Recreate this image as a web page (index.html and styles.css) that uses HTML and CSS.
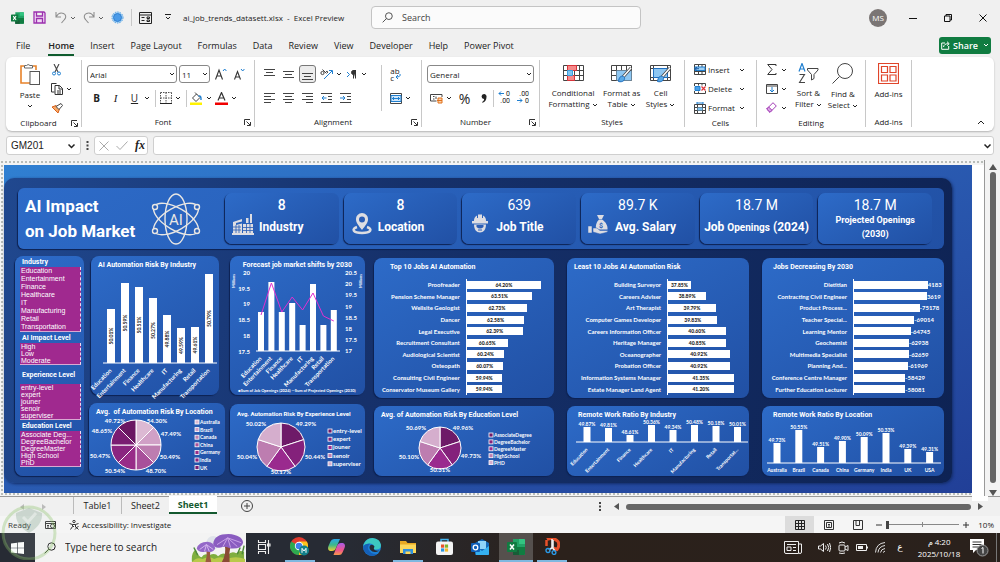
FILE: index.html
```html
<!DOCTYPE html>
<html lang="en">
<head>
    <meta charset="UTF-8">
    <meta name="viewport" content="width=device-width, initial-scale=1.0">
    <title>ai_job_trends_datasett.xlsx - Excel Preview</title>
    <link rel="stylesheet" href="styles.css">
</head>
<body>
    <!-- shared icons -->
    <svg class="defs" aria-hidden="true">
        <symbol id="chev" viewBox="0 0 6 4"><path d="M1 1l2 2 2-2" fill="none" stroke="currentColor" stroke-width="1"/></symbol>
        <symbol id="launch" viewBox="0 0 7 7"><path d="M.5 6V.5H6M2.500 2.500l3.500 3.500M6.500 3v3.500H3" fill="none" stroke="#333"/></symbol>
        <symbol id="excel" viewBox="0 0 18 16">
            <path d="M6 0h11a1 1 0 0 1 1 1v14a1 1 0 0 1-1 1H6z" fill="#21a366"/>
            <path d="M12 0h5a1 1 0 0 1 1 1v4h-6z" fill="#33c481"/>
            <path d="M6 8h12v7a1 1 0 0 1-1 1H6z" fill="#107c41"/>
            <path d="M6 11h6v5H6z" fill="#185c37"/>
            <rect y="3" width="10" height="10" rx="1" fill="#107c41"/>
            <path d="M3 5.500l4 5M7 5.500l-4 5" stroke="#fff" stroke-width="1.500"/>
        </symbol>
        <symbol id="lens" viewBox="0 0 12 12"><circle cx="7.500" cy="4.500" r="3.700" fill="none" stroke="currentColor"/><path d="M4.800 7.200L.7 11.300" stroke="currentColor"/></symbol>
    </svg>

    <header class="titlebar">
        <div class="quick">
            <svg width="13" height="12"><use href="#excel"/></svg>
            <button aria-label="Save"><svg width="13" height="13" viewBox="0 0 13 13"><path d="M1 1h10l1 1v10H1zM3.500 1v4h6V1M3.500 12V7.500h6V12" fill="#f0d9f5" stroke="#9b2fae" stroke-width="1.300"/></svg></button>
            <button class="dim" aria-label="Undo"><svg width="12" height="13" viewBox="0 0 12 13"><path d="M1 1v5h5M1.300 5.500C3 2.500 6 1.500 8.500 2.500s3 4 1 6L6.500 12" fill="none" stroke="#666" stroke-width="1.100"/></svg></button>
            <svg class="chev dim" width="6" height="4"><use href="#chev"/></svg>
            <button class="dim" aria-label="Redo"><svg width="12" height="13" viewBox="0 0 12 13"><path d="M11 1v5H6M10.700 5.500C9 2.500 6 1.500 3.500 2.500s-3 4-1 6L5.500 12" fill="none" stroke="#666" stroke-width="1.100"/></svg></button>
            <svg class="chev dim" width="6" height="4"><use href="#chev"/></svg>
            <button aria-label="Touch mode"><svg width="13" height="13" viewBox="0 0 13 13"><circle cx="6.500" cy="6.500" r="5.500" fill="#b8dcf7" stroke="#4b9be0" stroke-dasharray="1.500 1"/><circle cx="6.500" cy="6.500" r="4" fill="#4b9be8" stroke="#2e7fd0"/></svg></button>
            <i class="vline"></i>
            <button aria-label="Form"><svg width="13" height="12" viewBox="0 0 13 12"><path d="M.5.500h12v11H.5zM.5 3h12M2.500 5.500h3M2.500 8.500h3M8 5h2.500v1.500H8zM8 8h2.500v1.500H8z" fill="none" stroke="#222"/></svg></button>
            <button aria-label="Customize Quick Access Toolbar"><svg width="6" height="7" viewBox="0 0 6 7"><path d="M0 .500h6M1 3l2 2 2-2" fill="none" stroke="#222"/></svg></button>
        </div>
        <span class="doc-name">ai_job_trends_datasett.xlsx&nbsp; -&nbsp; Excel Preview</span>
        <label class="search">
            <svg width="11" height="11"><use href="#lens"/></svg>
            <input type="search" placeholder="Search" aria-label="Search">
        </label>
        <div class="window-buttons">
            <span class="avatar">MS</span>
            <button aria-label="Minimize"><svg width="8" height="8" viewBox="0 0 8 8"><path d="M0 4.500h8" stroke="#111"/></svg></button>
            <button aria-label="Restore"><svg width="8" height="8" viewBox="0 0 8 8"><path d="M.5 2h5.500v5.500H.5zM2 2V.5h5.500V6H6" fill="none" stroke="#111"/></svg></button>
            <button aria-label="Close"><svg width="8" height="8" viewBox="0 0 8 8"><path d="M.5.500l7 7M7.500.500l-7 7" stroke="#111"/></svg></button>
        </div>
    </header>

    <nav class="tabs">
        <a href="#">File</a>
        <a href="#" class="current">Home</a>
        <a href="#">Insert</a>
        <a href="#">Page Layout</a>
        <a href="#">Formulas</a>
        <a href="#">Data</a>
        <a href="#">Review</a>
        <a href="#">View</a>
        <a href="#">Developer</a>
        <a href="#">Help</a>
        <a href="#">Power Pivot</a>
        <button class="share">
            <svg width="9" height="9" viewBox="0 0 9 9"><path d="M4 2H.7v6.300h7V5M2.500 6C3 3.500 4.500 2.700 7.500 2.700M6 .7l2.200 2L6 4.700" fill="none" stroke="#fff"/></svg>
            Share
            <svg class="chev" width="6" height="4"><use href="#chev"/></svg>
        </button>
    </nav>

    <section class="ribbon">
        <div class="group g-clipboard">
            <div class="group-body">
                <button class="big">
                    <svg width="20" height="22" viewBox="0 0 20 22"><path d="M4 3H1v17h9" fill="none" stroke="#e8832a" stroke-width="1.600"/><path d="M13 3h3v4" fill="none" stroke="#e8832a" stroke-width="1.600"/><path d="M4.500 5V2.500h2Q8 .500 10 2.500h2.500V5z" fill="#fff" stroke="#666"/><rect x="10" y="8.500" width="9.500" height="13" fill="#fff" stroke="#555"/></svg>
                    <span>Paste</span>
                    <svg class="chev" width="6" height="4"><use href="#chev"/></svg>
                </button>
                <div class="stack">
                    <div class="row"><button class="ib" aria-label="Cut"><svg width="9" height="12" viewBox="0 0 9 12"><path d="M2 0l4 8M7 0L3 8" stroke="#444" stroke-width="1.100"/><circle cx="2" cy="9.500" r="1.500" fill="none" stroke="#1f7fd0"/><circle cx="7" cy="9.500" r="1.500" fill="none" stroke="#1f7fd0"/></svg></button></div>
                    <div class="row"><button class="ib" aria-label="Copy"><svg width="12" height="12" viewBox="0 0 12 12"><path d="M3.500 9H.5V.5h5M4 2.500h4.500l3 3v6H4zM8 2.500v3.500h3.500M6 8h4M6 10h4" fill="#fff" stroke="#333"/></svg></button><svg class="chev" width="6" height="4"><use href="#chev"/></svg></div>
                    <div class="row"><button class="ib" aria-label="Format painter"><svg width="12" height="12" viewBox="0 0 12 12"><path d="M1 5l6 6 1.500-4-3.500-3.500z" fill="#f7a865" stroke="#d9601a"/><path d="M5 4.500l3 3 3.500-4L10 1.500z" fill="#fff" stroke="#444"/></svg></button></div>
                </div>
            </div>
            <div class="group-name launcher">Clipboard<svg width="7" height="7"><use href="#launch"/></svg></div>
        </div>

        <div class="group g-font">
            <div class="group-body two-rows">
                <div class="row">
                    <span class="combo combo-font"><select aria-label="Font"><option>Arial</option></select><svg class="chev" width="6" height="4"><use href="#chev"/></svg></span>
                    <span class="combo combo-size"><select aria-label="Font size"><option>11</option></select><svg class="chev" width="6" height="4"><use href="#chev"/></svg></span>
                    <button class="ib" aria-label="Increase font size"><svg width="12" height="12" viewBox="0 0 12 12"><path d="M.5 11.500L4 2l3.500 9.500M1.800 8h4.500" fill="none" stroke="#333" stroke-width="1.100"/><path d="M8 3l1.700-2 1.700 2" fill="none" stroke="#1f7fd0"/></svg></button>
                    <button class="ib" aria-label="Decrease font size"><svg width="11" height="12" viewBox="0 0 11 12"><path d="M.5 11.500L3.500 3.500l3 8M1.500 9h4" fill="none" stroke="#333" stroke-width="1.100"/><path d="M7 1l1.700 2 1.700-2" fill="none" stroke="#1f7fd0"/></svg></button>
                </div>
                <div class="row">
                    <button class="ib glyph"><b>B</b></button>
                    <button class="ib glyph serif"><i>I</i></button>
                    <button class="ib glyph"><u>U</u></button><svg class="chev" width="6" height="4"><use href="#chev"/></svg>
                    <i class="vline"></i>
                    <button class="ib" aria-label="Borders"><svg width="12" height="12" viewBox="0 0 12 12"><path d="M.5.500v11M11.500.500v11M6 .500v11M.5.500h11M.5 6h11" fill="none" stroke="#555" stroke-dasharray="1.500 1"/><path d="M0 11.500h12" stroke="#222"/></svg></button><svg class="chev" width="6" height="4"><use href="#chev"/></svg>
                    <i class="vline"></i>
                    <button class="ib" aria-label="Fill color"><svg width="13" height="13" viewBox="0 0 13 13"><path d="M2.500 6L6.500 2l3.500 3.500-4 4zM5 .500l2 2" fill="#fff" stroke="#444"/><path d="M8.500 4c2-.5 2.700 1 2.500 4" fill="none" stroke="#1f7fd0" stroke-width="1.400"/><path d="M0 10.500h12V13H0z" fill="#fff200"/></svg></button><svg class="chev" width="6" height="4"><use href="#chev"/></svg>
                    <button class="ib" aria-label="Font color"><svg width="13" height="13" viewBox="0 0 13 13"><path d="M3 8.500L6.500.500 10 8.500M4.200 6h4.600" fill="none" stroke="#333" stroke-width="1.200"/><path d="M0 10.500h13V13H0z" fill="#f00000"/></svg></button><svg class="chev" width="6" height="4"><use href="#chev"/></svg>
                </div>
            </div>
            <div class="group-name launcher">Font<svg width="7" height="7"><use href="#launch"/></svg></div>
        </div>

        <div class="group g-align">
            <div class="group-body">
                <div class="two-rows">
                    <div class="row">
                        <button class="ib" aria-label="Top align"><svg width="11" height="11" viewBox="0 0 11 11"><path d="M0 .500h11M2 3.500h7M0 6.500h11" stroke="#444"/></svg></button>
                        <button class="ib" aria-label="Middle align"><svg width="11" height="11" viewBox="0 0 11 11"><path d="M0 2.500h11M2 5.500h7M0 8.500h11" stroke="#444"/></svg></button>
                        <button class="ib pressed" aria-label="Bottom align"><svg width="11" height="11" viewBox="0 0 11 11"><path d="M0 4.500h11M2 7.500h7M0 10.500h11" stroke="#444"/></svg></button>
                        <button class="ib" aria-label="Orientation"><svg width="13" height="12" viewBox="0 0 13 12"><circle cx="2.500" cy="5" r="1.600" fill="none" stroke="#444"/><path d="M2.500 1.500l4 4M6 3.500q2-1 1.500 1.500" fill="none" stroke="#444"/><path d="M4 11L12 3M9 2.500h3.500V6" fill="none" stroke="#1f7fd0"/></svg></button><svg class="chev" width="6" height="4"><use href="#chev"/></svg>
                        <button class="ib" aria-label="Text direction"><svg width="9" height="9" viewBox="0 0 9 9"><path d="M0 2l2.500 2.500L0 7" fill="none" stroke="#1f7fd0"/><path d="M6.500 8.500v-8h2.500M8.500.500v8M6.500.500a2 2 0 0 0 0 4z" fill="#333" stroke="#333"/></svg></button><svg class="chev" width="6" height="4"><use href="#chev"/></svg>
                    </div>
                    <div class="row">
                        <button class="ib" aria-label="Align left"><svg width="11" height="11" viewBox="0 0 11 11"><path d="M0 .500h11M0 3.500h7M0 6.500h11M0 9.500h7" stroke="#444"/></svg></button>
                        <button class="ib" aria-label="Center"><svg width="11" height="11" viewBox="0 0 11 11"><path d="M0 .500h11M2 3.500h7M0 6.500h11M2 9.500h7" stroke="#444"/></svg></button>
                        <button class="ib" aria-label="Align right"><svg width="11" height="11" viewBox="0 0 11 11"><path d="M0 .500h11M4 3.500h7M0 6.500h11M4 9.500h7" stroke="#444"/></svg></button>
                        <button class="ib" aria-label="Decrease indent"><svg width="11" height="11" viewBox="0 0 11 11"><path d="M0 .500h11M7 3.500h4M7 6.500h4M0 9.500h11" stroke="#444"/><path d="M5.500 5H1M3 3L1 5l2 2" fill="none" stroke="#1f7fd0"/></svg></button>
                        <button class="ib" aria-label="Increase indent"><svg width="11" height="11" viewBox="0 0 11 11"><path d="M0 .500h11M7 3.500h4M7 6.500h4M0 9.500h11" stroke="#444"/><path d="M0 5h4.500M3 3l2 2-2 2" fill="none" stroke="#1f7fd0"/></svg></button>
                    </div>
                </div>
                <i class="vline tall"></i>
                <div class="two-rows">
                    <div class="row"><button class="ib" aria-label="Wrap text"><span class="wrap-text">ab<br>c</span><svg class="wrap-arrow" width="6" height="6" viewBox="0 0 6 6"><path d="M5 0q1 3-4 3M3 1L1 3l2 2" fill="none" stroke="#1f7fd0"/></svg></button></div>
                    <div class="row"><button class="ib" aria-label="Merge"><svg width="12" height="11" viewBox="0 0 12 11"><path d="M.5.500h11v10H.5z" fill="#fff" stroke="#444"/><path d="M1 2.500h10v6H1z" fill="#cfe6fa" stroke="#1f7fd0"/><path d="M2 5.500h8M4 4L2.500 5.500 4 7M8 4l1.500 1.500L8 7" fill="none" stroke="#1f7fd0"/></svg></button><svg class="chev" width="6" height="4"><use href="#chev"/></svg></div>
                </div>
            </div>
            <div class="group-name launcher">Alignment<svg width="7" height="7"><use href="#launch"/></svg></div>
        </div>

        <div class="group g-number">
            <div class="group-body two-rows">
                <div class="row"><span class="combo combo-number"><select aria-label="Number format"><option>General</option></select><svg class="chev" width="6" height="4"><use href="#chev"/></svg></span></div>
                <div class="row">
                    <button class="ib" aria-label="Accounting format"><svg width="13" height="11" viewBox="0 0 13 11"><path d="M12 4V1.500H.5V8h6M3 3.500h1.500M3 6h1.500M6 3.500v2.500" fill="none" stroke="#444"/><path d="M8 5h4v5H8zM7 7.500h5" fill="#fbd0a8" stroke="#e0701a"/></svg></button><svg class="chev" width="6" height="4"><use href="#chev"/></svg>
                    <button class="ib glyph percent">%</button>
                    <button class="ib" aria-label="Comma style"><svg width="6" height="9" viewBox="0 0 6 9"><path d="M3 0a2.500 2.500 0 0 1 2.500 3C5.500 6 4 8 1.500 8.700L1 8c1.500-.8 2-1.600 2.100-3A2.500 2.500 0 1 1 3 0z" fill="#222"/></svg></button>
                    <i class="vline"></i>
                    <button class="ib decimals" aria-label="Increase decimal"><span><svg width="6" height="5" viewBox="0 0 6 5"><path d="M6 2.500H1M3 .500l-2 2 2 2" fill="none" stroke="#1f7fd0"/></svg> 0</span><span>.00</span></button>
                    <button class="ib decimals" aria-label="Decrease decimal"><span>.00</span><span><svg width="6" height="5" viewBox="0 0 6 5"><path d="M0 2.500h5M3 .500l2 2-2 2" fill="none" stroke="#1f7fd0"/></svg> 0</span></button>
                </div>
            </div>
            <div class="group-name launcher">Number<svg width="7" height="7"><use href="#launch"/></svg></div>
        </div>

        <div class="group g-styles">
            <div class="group-body">
                <button class="big">
                    <svg width="21" height="20" viewBox="0 0 21 20"><path d="M.5 2.500h20v15H.5zM.5 7.500h20M.5 12.500h20M4.500 2.500v15M11.500 2.500v15M16.500 2.500v15" fill="#fff" stroke="#444"/><path d="M4.500 2.500h9v5h-9zM4.500 12.500h7v5h-7z" fill="#f58a8a" stroke="#d9343a"/><path d="M4.500 7.500h5v5h-5z" fill="#7fc4f2" stroke="#3aa0e0"/></svg>
                    <span>Conditional<br>Formatting <svg class="chev" width="6" height="4"><use href="#chev"/></svg></span>
                </button>
                <button class="big">
                    <svg width="21" height="20" viewBox="0 0 21 20"><path d="M.5 2.500h20v15H.5zM.5 7.500h20M.5 12.500h20M5.500 2.500v15M10.500 2.500v15M15.500 2.500v15" fill="#fff" stroke="#444"/><path d="M5.500 7.500h15v10h-15z" fill="#8ec7f2"/><path d="M20 5l-8 9" stroke="#444" stroke-width="3"/><path d="M20 5l-8 9" stroke="#fff" stroke-width="1.500"/><path d="M12.500 13.500c-3-1-4.500 1-5 5 4 1 6.500-1 6-4z" fill="#5aa9e6" stroke="#1f6fc0"/></svg>
                    <span>Format as<br>Table <svg class="chev" width="6" height="4"><use href="#chev"/></svg></span>
                </button>
                <button class="big">
                    <svg width="21" height="20" viewBox="0 0 21 20"><path d="M.5 2.500h20v15H.5zM.5 5.500h20M.5 14.500h20M3.500 2.500v15M17.500 2.500v15" fill="#fff" stroke="#444"/><path d="M3.500 5.500h14v9h-14z" fill="#8ec7f2" stroke="#1f6fc0"/><path d="M20 5l-8 9" stroke="#444" stroke-width="3"/><path d="M20 5l-8 9" stroke="#fff" stroke-width="1.500"/><path d="M12.500 13.500c-3-1-4.500 1-5 5 4 1 6.500-1 6-4z" fill="#5aa9e6" stroke="#1f6fc0"/></svg>
                    <span>Cell<br>Styles <svg class="chev" width="6" height="4"><use href="#chev"/></svg></span>
                </button>
            </div>
            <div class="group-name">Styles</div>
        </div>

        <div class="group g-cells">
            <div class="group-body stack">
                <button class="row line"><svg width="12" height="11" viewBox="0 0 12 11"><path d="M.5.500h11v10H.5zM4.500.500v10M8 .500v10M.5 7.500h11" fill="#fff" stroke="#444"/><path d="M1 3h10v3.500H1z" fill="#9fd0f5" stroke="#1f7fd0"/><path d="M5 4.700H1M3 3L1 4.700 3 6.500" fill="none" stroke="#1f5fa8"/></svg><span>Insert</span><svg class="chev" width="6" height="4"><use href="#chev"/></svg></button>
                <button class="row line"><svg width="12" height="11" viewBox="0 0 12 11"><path d="M.5 3V.5h11V3M.5 8v2.500h11V8M4.500.500v2M8 .500v2M4.500 8.500v2" fill="#fff" stroke="#444"/><path d="M1 3.500h5v4H1z" fill="#4ba0e8" stroke="#1f7fd0"/><path d="M7.500 3.500l4 4M11.500 3.500l-4 4" stroke="#e0343a" stroke-width="1.200"/></svg><span>Delete</span><svg class="chev" width="6" height="4"><use href="#chev"/></svg></button>
                <button class="row line"><svg width="12" height="12" viewBox="0 0 12 12"><path d="M.5 2.500h11v9H.5zM3.500 2.500v9M8.500 2.500v9M.5 5.500h11M.5 8.500h11" fill="#fff" stroke="#444"/><path d="M3.500 5.500h5v3h-5z" fill="#7fc4f2"/><path d="M3 0v2M9 0v2M3 1h6" stroke="#1f7fd0"/></svg><span>Format</span><svg class="chev" width="6" height="4"><use href="#chev"/></svg></button>
            </div>
            <div class="group-name">Cells</div>
        </div>

        <div class="group g-editing">
            <div class="group-body">
                <div class="stack">
                    <div class="row"><button class="ib" aria-label="AutoSum"><svg width="10" height="11" viewBox="0 0 10 11"><path d="M9 2V.5H.7L5 5.500.7 10.500H9V9" fill="none" stroke="#333"/></svg></button><svg class="chev" width="6" height="4"><use href="#chev"/></svg></div>
                    <div class="row"><button class="ib" aria-label="Fill"><svg width="12" height="10" viewBox="0 0 12 10"><path d="M.5.500h11v9H.5zM.5 2h11" fill="#fff" stroke="#444"/><path d="M6 3v5M4 6l2 2 2-2" fill="none" stroke="#1f7fd0"/></svg></button><svg class="chev" width="6" height="4"><use href="#chev"/></svg></div>
                    <div class="row"><button class="ib" aria-label="Clear"><svg width="11" height="11" viewBox="0 0 11 11"><path d="M.7 7L7 .7l3.300 3.300L4 10.300z" fill="#fff" stroke="#a23bb5"/><path d="M.7 7l2-2L6 8.300l-2 2z" fill="#d9a3e3" stroke="#a23bb5"/></svg></button><svg class="chev" width="6" height="4"><use href="#chev"/></svg></div>
                </div>
                <button class="big">
                    <svg width="21" height="20" viewBox="0 0 21 20"><path d="M1 8.500L4 .500l3 8M2 6h4" fill="none" stroke="#1f7fd0" stroke-width="1.200"/><path d="M1.500 11.500h5l-5 8h5.500" fill="none" stroke="#444" stroke-width="1.100"/><path d="M9.500 5.500h10.500v1.500l-4 4.500v4l-2.500 1.500v-5.500l-4-4.500z" fill="#fff" stroke="#444"/></svg>
                    <span>Sort &amp;<br>Filter <svg class="chev" width="6" height="4"><use href="#chev"/></svg></span>
                </button>
                <button class="big">
                    <svg width="21" height="21" viewBox="0 0 21 21"><circle cx="13" cy="8" r="7.500" fill="#fff" stroke="#444"/><path d="M7.500 13.500L.5 20.500" stroke="#444"/></svg>
                    <span>Find &amp;<br>Select <svg class="chev" width="6" height="4"><use href="#chev"/></svg></span>
                </button>
            </div>
            <div class="group-name">Editing</div>
        </div>

        <div class="group g-addins">
            <div class="group-body">
                <button class="big">
                    <svg width="21" height="21" viewBox="0 0 21 21"><path d="M.5.500h20v20H.5zM3.500 3.500h6v6h-6zM12 3.500h6v6h-6zM3.500 12h6v6h-6zM12 12h6v6h-6z" fill="#fff" stroke="#e0452a" stroke-width="1.200"/></svg>
                    <span>Add-ins</span>
                </button>
            </div>
            <div class="group-name">Add-ins</div>
        </div>
        <button class="collapse" aria-label="Collapse ribbon"><svg width="8" height="5" viewBox="0 0 8 5"><path d="M1 4l3-3 3 3" fill="none" stroke="#222"/></svg></button>
    </section>

    <section class="formula-row">
        <label class="name-box"><input value="GM201" aria-label="Name box"><svg width="9" height="6" viewBox="0 0 6 4"><use href="#chev"/></svg></label>
        <svg width="3" height="9" viewBox="0 0 3 9"><path d="M.5 0h2v2h-2zM.5 3.500h2v2h-2zM.5 7h2v2h-2z" fill="#444"/></svg>
        <div class="fx">
            <svg width="10" height="10" viewBox="0 0 10 10"><path d="M.5.500l9 9M9.500.500l-9 9" stroke="#aaa"/></svg>
            <svg width="12" height="9" viewBox="0 0 12 9"><path d="M.5 5l3.500 3.500L11.500.500" fill="none" stroke="#aaa"/></svg>
            <i>fx</i>
        </div>
        <label class="formula"><input aria-label="Formula"><svg width="9" height="6" viewBox="0 0 6 4"><use href="#chev"/></svg></label>
    </section>

    <main class="sheet">
        <div class="canvas">
            <div class="board">
                <div class="hero">
                    <h1>AI Impact<br>on Job Market</h1>
                    <svg class="atom" width="52" height="52" viewBox="0 0 52 52">
                        <g fill="none" stroke="#e9e7e4" stroke-width="1.400">
                            <ellipse cx="26" cy="26" rx="11" ry="25"/>
                            <ellipse cx="26" cy="26" rx="11" ry="25" transform="rotate(60 26 26)"/>
                            <ellipse cx="26" cy="26" rx="11" ry="25" transform="rotate(-60 26 26)"/>
                        </g>
                        <g fill="#2a60b8" stroke="#e9e7e4" stroke-width="1.400">
                            <circle cx="5" cy="14" r="2.500"/><circle cx="47" cy="14" r="2.500"/><circle cx="5" cy="38" r="2.500"/><circle cx="47" cy="38" r="2.500"/>
                        </g>
                        <text x="26" y="31.500">AI</text>
                    </svg>
                    <div class="kpis">
                        <div class="kpi"><strong>8</strong><div><svg width="22" height="22" viewBox="0 0 22 22"><path d="M1 9l9-3v2.500L4 10v2l6-1.500V20H1zM11 11h10v9H11zM14 5h2.500v5H14zM18 1h2v9h-2zM0 20h22v2H0z" fill="#dddde2"/><path d="M11 14.500h10M11 17.500h10M14.500 11v9M18 11v9M1 14h8M1 17h8M4 12v8M7 12v8" stroke="#2a5db5" stroke-width=".8"/></svg><span>Industry</span></div></div>
                        <div class="kpi"><strong>8</strong><div><svg width="22" height="22" viewBox="0 0 18 22"><path d="M9 0a6 6 0 0 1 6 6.500C15 10 12 13 9 17 6 13 3 10 3 6.500A6 6 0 0 1 9 0z" fill="#dddde2"/><circle cx="9" cy="6.500" r="3" fill="#2a5db5"/><path d="M4 14c-6 2-4 6 5 6s11-4 5-6" fill="none" stroke="#dddde2" stroke-width="2.500"/></svg><span>Location</span></div></div>
                        <div class="kpi num-light"><strong>639</strong><div><svg width="22" height="22" viewBox="0 0 18 22"><path d="M3 8a6 6 0 0 1 3-5.500V5h1V1.500h4V5h1V2.500A6 6 0 0 1 15 8h2v2.500H1V8z" fill="#dddde2"/><path d="M3 11.500h12c0 5-2.500 8-6 8s-6-3-6-8z" fill="#dddde2"/><path d="M5.500 12h7v2q-3.500 3-7 0z" fill="#2a5db5"/><path d="M7 17h4" stroke="#2a5db5"/></svg><span>Job Title</span></div></div>
                        <div class="kpi num-light"><strong>89.7 K</strong><div><svg width="22" height="22" viewBox="0 0 22 22"><path d="M9 2h7l-2 4h-3zM11 6.500h3c4 2.500 6 6.500 5.500 10H8c-.5-4 0-7 3-10z" fill="#dddde2"/><path d="M0 13h4v7H0zM5 15h4l3 2.500h7q2 1-1 2L12 21l-7-2z" fill="#dddde2" stroke="#2a5db5" stroke-width=".5"/><text x="13" y="14.500" class="coin">$</text></svg><span>Avg. Salary</span></div></div>
                        <div class="kpi num-light"><strong>18.7 M</strong><div class="mid"><span>Job <small>Openings</small> (2024)</span></div></div>
                        <div class="kpi num-light tight"><strong>18.7 M</strong><div class="mid"><span>Projected Openings<br>(2030)</span></div></div>
                    </div>
                </div>

                <div class="panels">
                    <div class="left">
                        <aside class="card slicers">
                            <h3>Industry</h3>
                            <ul class="slicer roomy"><li>Education</li><li>Entertainment</li><li>Finance</li><li>Healthcare</li><li>IT</li><li>Manufacturing</li><li>Retail</li><li>Transportation</li></ul>
                            <h3>AI Impact Level</h3>
                            <ul class="slicer"><li>High</li><li>Low</li><li>Moderate</li></ul>
                            <h3 class="spaced">Experience Level</h3>
                            <ul class="slicer"><li>entry-level</li><li>expert</li><li>jouner</li><li>senoir</li><li>superviser</li></ul>
                            <h3>Education Level</h3>
                            <ul class="slicer"><li>Associate Deg...</li><li>DegreeBachelor</li><li>DegreeMaster</li><li>High School</li><li>PhD</li></ul>
                        </aside>
                        <div class="col c-industry">
                            <section class="card narrow"><h3>AI Automation Risk By Industry</h3><svg id="riskIndustry" viewBox="0 0 128 124"></svg></section>
                            <section class="card"><h3>Avg.&nbsp; of Automation Risk By Location</h3><svg id="pieLocation" viewBox="0 0 136 58"></svg></section>
                        </div>
                        <div class="col c-forecast">
                            <section class="card"><h3 class="centered">Forecast job market shifts by 2030</h3><svg id="forecast" viewBox="0 0 135 124"></svg></section>
                            <section class="card"><h3 class="snug">Avg. Automation Risk By Experience Level</h3><svg id="pieExperience" viewBox="0 0 135 57"></svg></section>
                        </div>
                    </div>
                    <div class="right">
                        <div class="col c-top">
                            <section class="card"><h3 class="inset">Top 10 Jobs AI Automation</h3><div class="hbars" id="topJobs"></div></section>
                            <section class="card"><h3>Avg. of Automation Risk By Education Level</h3><svg id="pieEducation" viewBox="0 0 180 55"></svg></section>
                        </div>
                        <div class="col c-least">
                            <section class="card"><h3>Least 10 Jobs AI Automation Risk</h3><div class="hbars" id="leastJobs"></div></section>
                            <section class="card"><h3 class="indent">Remote Work Ratio By Industry</h3><svg id="remoteIndustry" viewBox="0 0 182 55"></svg></section>
                        </div>
                        <div class="col c-decrease">
                            <section class="card"><h3 class="indent">Jobs Decreasing By 2030</h3><div class="hbars outside" id="decreasing"></div></section>
                            <section class="card"><h3 class="indent">Remote Work Ratio By Location</h3><svg id="remoteLocation" viewBox="0 0 182 55"></svg></section>
                        </div>
                    </div>
                </div>
            </div>
        </div>
        <div class="vscroll">
            <svg width="8" height="6" viewBox="0 0 8 6"><path d="M4 0l4 6H0z" fill="#555"/></svg>
            <i></i>
            <svg width="8" height="6" viewBox="0 0 8 6"><path d="M4 6l4-6H0z" fill="#555"/></svg>
        </div>
    </main>

    <div class="sheet-tabs">
        <div class="tab-arrows">
            <svg width="4" height="6" viewBox="0 0 4 6"><path d="M4 0v6L0 3z" fill="#bbb"/></svg>
            <svg width="4" height="6" viewBox="0 0 4 6"><path d="M0 0v6l4-3z" fill="#bbb"/></svg>
        </div>
        <button>Table1</button>
        <button>Sheet2</button>
        <button class="active">Sheet1</button>
        <button class="add" aria-label="New sheet"><svg width="12" height="12" viewBox="0 0 12 12"><path d="M6 3v6M3 6h6" stroke="#444"/><circle cx="6" cy="6" r="5.500" fill="none" stroke="#444"/></svg></button>
        <div class="hscroll">
            <svg class="grip" width="2" height="9" viewBox="0 0 2 9"><path d="M0 0h2v2H0zM0 3.500h2v2H0zM0 7h2v2H0z" fill="#444"/></svg>
            <svg width="5" height="7" viewBox="0 0 5 7"><path d="M5 0v7L0 3.500z" fill="#555"/></svg>
            <i></i>
            <svg width="5" height="7" viewBox="0 0 5 7"><path d="M0 0v7l5-3.500z" fill="#555"/></svg>
        </div>
    </div>

    <div class="status">
        <span class="ready">Ready</span>
        <svg width="11" height="10" viewBox="0 0 11 10"><path d="M.5 1.500h10v7H.5zM.5 3.500h10M2 5.500h2M2 7h2" fill="none" stroke="#333"/><circle cx="7.500" cy="6" r="2" fill="#f3f3f3" stroke="#333"/></svg>
        <svg class="access" width="10" height="10" viewBox="0 0 10 10"><circle cx="5" cy="1.500" r="1.200" fill="none" stroke="#333"/><path d="M.5 3.500l3 1v2L1.500 9.500M9.500 3.500l-3 1v2l1 1.500M3.500 4.500h3M4 6l1 1M6 6l3.500 3.500M9.500 6L6 9.500" fill="none" stroke="#333"/></svg>
        <span>Accessibility: Investigate</span>
        <div class="views">
            <button class="on" aria-label="Normal"><svg width="10" height="10" viewBox="0 0 10 10"><path d="M.5.500h9v9H.5zM.5 3.500h9M.5 6.500h9M3.500.500v9M6.500.500v9" fill="none" stroke="#222"/></svg></button>
            <button aria-label="Page layout"><svg width="10" height="10" viewBox="0 0 10 10"><path d="M.5.500h9v9H.5zM2.500 2.500h5v5h-5zM4 4.500h2M4 6h2" fill="none" stroke="#333"/></svg></button>
            <button aria-label="Page break preview"><svg width="10" height="10" viewBox="0 0 10 10"><path d="M.5.500h9v9H.5zM3 .500v5M6.500.500v5M3 5.500h3.500" fill="none" stroke="#333"/></svg></button>
            <button class="zoom-btn" aria-label="Zoom out"><svg width="6" height="6" viewBox="0 0 6 6"><path d="M0 3h6" stroke="#333"/></svg></button>
            <input type="range" min="10" max="400" value="10" aria-label="Zoom">
            <button class="zoom-btn" aria-label="Zoom in"><svg width="6" height="6" viewBox="0 0 6 6"><path d="M0 3h6M3 0v6" stroke="#333"/></svg></button>
            <span>10%</span>
        </div>
    </div>

    <footer class="taskbar">
        <button class="start" aria-label="Start"><svg width="13" height="12" viewBox="0 0 13 12"><path d="M0 1.500L6 .7v5H0zM6.700.6L13 0v5.700H6.700zM0 6.300h6v5l-6-.8zM6.700 6.300H13V12l-6.300-.7z" fill="#fff"/></svg></button>
        <label class="task-search">
            <svg width="12" height="12"><use href="#lens"/></svg>
            <input type="search" placeholder="Type here to search" aria-label="Type here to search">
            <svg class="mushrooms" width="55" height="28" viewBox="0 0 55 29">
                <circle cx="22" cy="9" r="7" fill="#dfe3ea"/>
                <path d="M0 29q-1-10 4-13 3 8 6 8 3-5 8-2 6-3 9 1 5-5 10-1 4-5 9-2 4-4 8-1v10z" fill="#7fae3f"/>
                <path d="M0 29q5-6 11-3 7-4 12 0 7-4 13 0 9-4 19 0v3z" fill="#b9c94a"/>
                <path d="M2 14l4 8M50 14l-3 7M54 12l-2 9" stroke="#4d8a3a" stroke-width="1.500"/>
                <path d="M34 12q2 8-3 17h8q-1-9 1-17z" fill="#8a4a34"/>
                <path d="M15 16q1 7-1 13h6q-2-6-1-13z" fill="#9a5a40"/>
                <path d="M22 10Q23 0 38 0q14 1 15 9-2 7-13 6-6-3-10-1-7 1-8-4z" fill="#8a5cc0"/>
                <path d="M26 11l11-7-5 9M37 4l3 10M37 4l10 9M37 4l14 5" stroke="#c9a3e8" fill="none"/>
                <path d="M5 15q2-7 11-7 8 1 8 7-2 5-9 3-8 2-10-3z" fill="#9468c8"/>
                <path d="M8 16l7-5-2 7M15 11l3 7M15 11l7 5" stroke="#d6b6ee" fill="none"/>
            </svg>
        </label>
        <div class="apps">
            <button aria-label="Task view"><svg width="14" height="14" viewBox="0 0 14 14"><path d="M1.500 0v2.500h7V0M1.500 14v-2.500h7V14M1.500 4.500h7v5h-7zM11.500 0v14M10.500 4h2.500v2h-2.500z" fill="none" stroke="#eee" stroke-width="1.100"/></svg></button>
            <button class="open" aria-label="Chrome"><svg width="20" height="19" viewBox="0 0 20 19"><circle cx="9" cy="9" r="9" fill="#e33b2e"/><path d="M9 9L1.200 4.500A9 9 0 0 0 9 18z" fill="#2da94f"/><path d="M9 9v9a9 9 0 0 0 7.800-13.500H9z" fill="#fcc31e"/><circle cx="9" cy="9" r="4.200" fill="#fff"/><circle cx="9" cy="9" r="3.300" fill="#3f80ea"/><circle cx="14" cy="13.500" r="5" fill="#12808a"/><path d="M12 15.800v-4.500l2 2.700 2-2.700v4.500" fill="none" stroke="#fff"/></svg></button>
            <button aria-label="Copilot"><svg width="17" height="16" viewBox="0 0 17 16"><defs><linearGradient id="cp1" x2="0" y2="1"><stop stop-color="#2aa6e8"/><stop offset=".5" stop-color="#3db98a"/><stop offset="1" stop-color="#f0d030"/></linearGradient><linearGradient id="cp2" x2="0" y2="1"><stop stop-color="#a95be8"/><stop offset=".6" stop-color="#f0558a"/><stop offset="1" stop-color="#f79a4a"/></linearGradient></defs><path d="M6 0h6l-4 9q-1 3-4 3H2q-3-1-1.500-5L2.500 2.500Q3.500 0 6 0z" fill="url(#cp1)"/><path d="M11 16H5.500l3.500-9q1-3 4-3h2q3 1 1.500 5L14.500 13.500Q13.500 16 11 16z" fill="url(#cp2)"/></svg></button>
            <button aria-label="Edge"><svg width="18" height="18" viewBox="0 0 18 18"><circle cx="9" cy="9" r="9" fill="#1b7fd6"/><path d="M.5 7Q3 0 9.500 0 17 .500 18 7q0 4.500-5 4.500-3 0-2-2Q11.500 6 7 5.500 2 5.500.5 9z" fill="#3cc8c0"/><path d="M.2 8Q3 5 7 5.800q-3 2.200-1.500 6Q8 16.500 14 16 9 20 4 16 0 13 .2 8z" fill="#1560b8"/><path d="M11.500 8.500Q10 6 7.500 7q-2 2.500 0 5 2.500 3 7 1.500l2-1q-3 .5-5-.5-1.500-1.500 0-3.500z" fill="#272b34"/></svg></button>
            <button class="open" aria-label="File Explorer"><svg width="16" height="14" viewBox="0 0 16 14"><path d="M0 1h6l1.500 2H16v10H0z" fill="#e8a923"/><path d="M0 4.500h16V13H0z" fill="#fbd75b"/><path d="M3 9h10v5H3z" fill="#2f8fdc"/><path d="M5.500 11.500h5V14h-5z" fill="#fbd75b"/></svg></button>
            <button aria-label="Store"><svg width="17" height="17" viewBox="0 0 17 17"><path d="M5 4V1.500h7V4" fill="none" stroke="#45b5f0" stroke-width="1.500"/><rect y="3.500" width="17" height="13.500" rx="2" fill="#f4f4f4"/><path d="M5 6.500h3.200v3.200H5z" fill="#e8512a"/><path d="M8.900 6.500h3.200v3.200H8.900z" fill="#7fb52a"/><path d="M5 10.400h3.200v3.200H5z" fill="#2a95e0"/><path d="M8.900 10.400h3.200v3.200H8.900z" fill="#f5b82a"/></svg></button>
            <button aria-label="Outlook"><svg width="18" height="16" viewBox="0 0 18 16"><path d="M4 4l7-4 7 4v11a1 1 0 0 1-1 1H5a1 1 0 0 1-1-1z" fill="#1468b8"/><path d="M7 2h8v8H7z" fill="#8fd3f8"/><path d="M4 7l7 5 7-5v8a1 1 0 0 1-1 1H5z" fill="#35b0f0"/><rect y="4" width="9" height="9" rx="1" fill="#0f5fb8"/><circle cx="4.500" cy="8.500" r="2.300" fill="none" stroke="#fff" stroke-width="1.300"/></svg></button>
            <button class="open focused" aria-label="Excel"><svg width="18" height="16"><use href="#excel"/></svg></button>
            <button class="open" aria-label="Snipping Tool"><svg width="15" height="17" viewBox="0 0 15 17"><path d="M2 1.500q6-3 11 2 2 4-1 8l-4-1.500" fill="none" stroke="#e8502a" stroke-width="3"/><path d="M1.500 2v6" stroke="#e8502a" stroke-width="2.500"/><path d="M7 1v8l3 4M8 2v7l-4 3" stroke="#eee" stroke-width="1.600" fill="none"/><circle cx="3" cy="12.500" r="2" fill="none" stroke="#2a9ae8" stroke-width="1.400"/><circle cx="9" cy="14.500" r="1.900" fill="none" stroke="#2a9ae8" stroke-width="1.400"/></svg></button>
        </div>
        <div class="tray">
            <svg class="news" width="18" height="13" viewBox="0 0 18 13"><path d="M.5.500h14v12H2a1.500 1.500 0 0 1-1.500-1.500zM14.500 3h3v8a1.500 1.500 0 0 1-3 0M3 3.500h9M3 6h4v3.500H3zM9 6.500h3M9 9.500h3" fill="none" stroke="#eee"/></svg>
            <svg width="13" height="11" viewBox="0 0 13 11"><path d="M.5 4v3h2l3 2.500v-8L2.500 4zM7.500 3.500q1.500 2 0 4M9.500 2q2.500 3.500 0 7M11.500 1q2.500 4.500 0 9" fill="none" stroke="#eee"/></svg>
            <svg width="11" height="13" viewBox="0 0 11 13"><rect x="1" y="4" width="6" height="6" rx="1" fill="none" stroke="#eee"/><path d="M7 6l3-1.500v5L7 8M1 2q3-2 6 0M1 12q3 1 6 0" fill="none" stroke="#eee"/></svg>
            <svg width="12" height="7" viewBox="0 0 12 7"><path d="M.5.500h10v6H.5zM11.500 2.500v2" fill="none" stroke="#eee"/><path d="M2 2h5v3H2z" fill="#eee"/></svg>
            <svg width="10" height="11" viewBox="0 0 10 11"><path d="M.5 10.500Q1 1.500 10 .500M3 10.500Q3.500 4.500 10 3.500M5.500 10.500Q6 7 10 6.500M8 10.500l2-1.500" fill="none" stroke="#ddd"/></svg>
            <span class="lang">ع</span>
            <div class="clock"><span dir="rtl">4:20 م</span><span>2025/10/18</span></div>
            <svg width="19" height="18" viewBox="0 0 19 18"><path d="M0 0h14v11H6l-3 3v-3H0z" fill="#fff"/><path d="M2.500 3h9M2.500 5.500h9M2.500 8h6" stroke="#333"/><circle cx="12.500" cy="11.500" r="5.500" fill="#444" stroke="#999"/><path d="M11.500 9.500l1.500-1v6" fill="none" stroke="#fff"/></svg>
            <i class="peek"></i>
        </div>
    </footer>

    <svg class="watermark" width="60" height="55" viewBox="0 0 60 55" aria-hidden="true">
        <circle cx="29" cy="28" r="26" fill="#cfe0d4" fill-opacity=".12" stroke="#8cc26a" stroke-opacity=".35" stroke-width="3"/>
        <path d="M29 3l13 5q1 12-13 20Q15 20 16 8z" fill="#7f9e88" fill-opacity=".3"/>
        <path d="M23 12l5 5 8-9" fill="none" stroke="#fff" stroke-opacity=".4" stroke-width="3"/>
    </svg>

    <script src="charts.js"></script>
</body>
</html>
```

FILE: styles.css
```css
* {
    box-sizing: border-box;
}

body {
    margin: 0;
    min-height: 100vh;
    display: flex;
    flex-direction: column;
    background-color: #f0f0f0;
    font-family: "Open Sans", "Noto Sans", sans-serif;
    font-size: 8px;
    line-height: 11px;
    color: #222;
}

button, input, select {
    font: inherit;
    color: inherit;
    border: none;
    background: none;
    padding: 0;
    margin: 0;
    outline: none;
}

button {
    display: flex;
    align-items: center;
    justify-content: center;
    cursor: pointer;
}

svg {
    flex: none;
}

h1, h3, ul {
    margin: 0;
    padding: 0;
}

.defs {
    position: absolute;
    width: 0;
    height: 0;
}

.chev {
    color: #222;
}

.dim {
    opacity: 0.7;
}

.vline {
    width: 1px;
    height: 17px;
    background-color: #c8c8c8;
}

/* Title bar */
.titlebar {
    display: flex;
    align-items: center;
    height: 35px;
    padding: 0 13px 0 11px;
}

.quick {
    display: flex;
    align-items: center;
    gap: 7px;
    width: 172px;
}

.quick button:nth-child(2) {
    margin: 0 2px;
}

.quick .chev {
    margin-left: -4px;
}

.quick button:last-child {
    margin-left: 6px;
}

.doc-name {
    width: 188px;
    white-space: nowrap;
}

.search {
    display: flex;
    align-items: center;
    gap: 9px;
    flex: 0 1 270px;
    height: 23px;
    padding: 0 10px;
    background-color: #fbfbfb;
    border: 1px solid #c4c4c4;
    border-radius: 4px;
    font-size: 9px;
    color: #444;
}

.search input {
    width: 100%;
}

input::placeholder {
    color: inherit;
    opacity: 1;
}

.window-buttons {
    display: flex;
    align-items: center;
    gap: 27px;
    margin-left: auto;
}

.avatar {
    width: 18px;
    height: 18px;
    margin-right: -5px;
    border-radius: 50%;
    background-color: #7a7574;
    color: #fff;
    line-height: 18px;
    text-align: center;
}

/* Ribbon tabs */
.tabs {
    display: flex;
    align-items: center;
    gap: 16px;
    height: 22px;
    padding: 0 9px 0 16px;
    font-size: 9px;
}

.tabs a {
    color: #222;
    text-decoration: none;
    line-height: 16px;
    border-bottom: 2px solid transparent;
    margin-top: 1px;
}

.tabs a.current {
    font-weight: 600;
    margin: 1px 0 0 2px;
    border-color: #0f5c2e;
}

.share {
    gap: 3px;
    width: 52px;
    height: 17px;
    margin: -2px 0 0 auto;
    border-radius: 3px;
    background-color: #107c41;
    color: #fff;
    font-weight: 600;
}

.share .chev {
    color: #fff;
    margin-left: 2px;
}

/* Ribbon */
.ribbon {
    display: flex;
    margin: 0 6px;
    padding-top: 3px;
    height: 74px;
    background-color: #fff;
    border-radius: 6px;
    box-shadow: 0 1px 2px rgba(0, 0, 0, 0.25);
}

.group {
    display: flex;
    flex-direction: column;
    border-right: 1px solid #c8c8c8;
    margin-bottom: 4px;
}

.group-body {
    display: flex;
    height: 57px;
}

.group-name {
    position: relative;
    line-height: 11px;
    text-align: center;
}

.group-name.launcher {
    padding-right: 10px;
}

.group-name svg {
    position: absolute;
    right: 3px;
    top: 3px;
}

.g-clipboard { width: 76px; }
.g-font { width: 173px; }
.g-align { width: 167px; }
.g-number { width: 118px; }
.g-styles { width: 145px; }
.g-cells { width: 72px; }
.g-editing { width: 109px; }
.g-addins { width: 46px; }

.row {
    display: flex;
    align-items: center;
}

.stack {
    display: flex;
    flex-direction: column;
}

.stack .row {
    height: 19px;
}

.two-rows {
    display: flex;
    flex-direction: column;
    gap: 2px;
    padding-top: 3px;
}

.two-rows .row {
    height: 22px;
}

.ib {
    width: 19px;
    height: 19px;
}

.ib.pressed {
    width: 17px;
    height: 18px;
    margin: 0 1px;
    border: 1px solid #777;
    border-radius: 3px;
    background-color: #ececec;
}

.glyph {
    font-size: 10px;
}

.serif {
    font-family: "Liberation Serif", serif;
    font-size: 11px;
}

.percent {
    margin-left: 3px;
    font-size: 14px;
}

.big {
    flex-direction: column;
    justify-content: flex-start;
    padding-top: 3px;
    text-align: center;
    white-space: nowrap;
}

.big > span {
    margin-top: 4px;
}

.g-clipboard .big {
    width: 34px;
    margin-left: 7px;
}

.g-clipboard .big > .chev {
    margin-top: 4px;
}

.g-font .group-body,
.g-number .group-body {
    padding-left: 5px;
}

.combo {
    display: grid;
    align-items: center;
    height: 18px;
    border: 1px solid #888;
    border-radius: 3px;
}

.combo > * {
    grid-area: 1 / 1;
}

.combo select {
    appearance: none;
    width: 100%;
    padding-left: 2px;
}

.combo .chev {
    justify-self: end;
    margin-right: 1px;
    pointer-events: none;
}

.combo-font { width: 90px; margin-right: 2px; }
.combo-size { width: 31px; margin-right: 1px; }
.combo-number { width: 107px; }

.g-font .vline {
    margin: 0 0 0 5px;
}

.g-align .group-body {
    padding-left: 5px;
}

.g-align .two-rows:first-child {
    width: 121px;
}

.vline.tall {
    height: 46px;
    margin: 5px 4px 0 0;
}

.wrap-text {
    font-size: 8px;
    line-height: 7px;
    text-align: left;
}

.wrap-arrow {
    margin: 6px 0 0 -5px;
}

.decimals {
    flex-direction: column;
    align-items: flex-end;
    font-family: Roboto, sans-serif;
    font-size: 7px;
    line-height: 7px;
    padding-right: 3px;
}

.g-styles .group-body {
    justify-content: space-evenly;
    padding: 0 3px;
}

.g-cells .group-body {
    padding-left: 9px;
}

.line {
    justify-content: flex-start;
    gap: 2px;
}

.line span {
    min-width: 27px;
    text-align: left;
}

.line .chev {
    margin-left: 2px;
}

.g-editing .group-body {
    padding-left: 5px;
    gap: 6px;
}

.g-editing .stack {
    width: 27px;
}

.g-addins .group-body {
    justify-content: center;
}

.collapse {
    margin: auto 9px 6px auto;
}

/* Formula bar */
.formula-row {
    display: flex;
    align-items: center;
    gap: 5px;
    padding: 5px 6px;
    height: 29px;
}

.name-box, .fx, .formula {
    display: flex;
    align-items: center;
    height: 19px;
    padding: 0 4px;
    background-color: #fff;
    border: 1px solid #cfcfcf;
    border-radius: 3px;
}

.name-box {
    width: 75px;
    font-family: "Liberation Sans", Arial, sans-serif;
    font-size: 10px;
}

.name-box input, .formula input {
    flex: 1;
    min-width: 0;
}

.fx {
    gap: 7px;
    width: 54px;
}

.fx i {
    font: italic bold 12px "Liberation Serif", serif;
}

.formula {
    flex: 1;
    padding: 0 1px;
}

/* Worksheet */
.sheet {
    display: flex;
    padding: 5px 0 3px 4px;
    background: radial-gradient(circle, #b9bdb9 40%, transparent 45%) 0 0 / 4px 4px #f4f4f4;
    border-bottom: 1px solid #999;
}

.canvas {
    flex: 1;
    margin-right: 12px;
    padding: 13px 20px 10px 0;
    background: linear-gradient(160deg, #3080d2 0%, #2c62b8 35%, #213f97 100%);
}

.board {
    padding: 10px 8px 7px 11px;
    border-radius: 10px;
    background: linear-gradient(100deg, #20488f 0%, #16316b 40%, #0e2354 100%);
    box-shadow: 1px 1px 3px #132c66;
}

.hero, .card, .kpi {
    background: linear-gradient(150deg, #2d6bc8 0%, #2150a4 100%);
    box-shadow: -1px 1px 1px #0d2253;
}

.hero {
    display: flex;
    align-items: center;
    height: 61px;
    margin: 0 0 7px 3px;
    padding: 0 12px 0 7px;
    border-radius: 6px;
    color: #fff;
    font-family: Roboto, sans-serif;
}

.hero h1 {
    width: 125px;
    font-size: 17px;
    line-height: 25px;
    white-space: nowrap;
}

.atom {
    margin-right: 23px;
}

.atom text {
    font-size: 15px;
    fill: #e9e7e4;
    text-anchor: middle;
}

.coin {
    font-size: 7px;
    font-weight: bold;
    fill: #2a5db5;
    text-anchor: middle;
}

.kpis {
    display: flex;
    flex: 1;
    gap: 5px;
}

.kpi {
    flex: 1 1 0;
    height: 51px;
    border-radius: 7px;
    text-align: center;
    font-weight: bold;
    font-size: 12px;
    line-height: 14px;
    white-space: nowrap;
}

.kpi strong {
    display: block;
    font-size: 14px;
    font-weight: 500;
    line-height: 24px;
}

.num-light strong {
    font-weight: 400;
}

.kpi > div {
    display: flex;
    align-items: center;
    gap: 5px;
    height: 22px;
    padding-left: 7px;
    margin-top: -4px;
}

.kpi > div span {
    margin-top: 6px;
}

.kpi > .mid {
    justify-content: center;
    padding-left: 0;
}

.kpi small {
    font-size: 10px;
}

.tight {
    font-size: 9px;
}

/* Dashboard cards */
.panels, .left, .right {
    display: flex;
}

.panels { gap: 9px; }
.left { flex: 350 1 0; gap: 5px; }
.right { flex: 570 1 0; gap: 13px; padding-top: 2px; }

.slicers { flex: 69 1 69px; }
.c-industry { flex: 136 1 136px; }
.c-forecast { flex: 135 1 135px; }
.c-top { flex: 180 1 180px; }
.c-least, .c-decrease { flex: 182 1 182px; }

.slicers, .col {
    min-width: 0;
}

.col {
    display: flex;
    flex-direction: column;
    justify-content: space-between;
}

.card {
    border-radius: 8px;
    color: #fff;
    font-family: Roboto, sans-serif;
}

.card h3 {
    padding: 4px 7px 0;
    font-size: 7px;
    line-height: 11px;
    white-space: nowrap;
}

.card h3.snug { font-size: 6px; padding-left: 7px; }
.card h3.inset { padding-left: 16px; }
.card h3.indent { padding-left: 11px; }
.card h3.centered { padding: 4px 0 0; text-align: center; }

.card svg {
    display: block;
    width: 100%;
    overflow: visible;
}

.narrow {
    margin: 0 6px 0 2px;
}

.slicers {
    padding: 1px 3px 8px 5px;
}

.card.slicers h3 {
    padding: 0 2px;
    line-height: 10px;
}

.card.slicers h3.spaced {
    padding: 4px 2px;
}

.slicer {
    list-style: none;
    margin-bottom: 1px;
    padding-left: 1px;
    background-color: #a0298f;
    border-right: 1px dashed #f0d8ec;
    border-bottom: 1px solid #d9a8d2;
    font: 7px "Liberation Sans", Arial, sans-serif;
}

.slicer li {
    line-height: 7px;
    white-space: nowrap;
}

.slicer.roomy li {
    line-height: 8px;
}

/* Horizontal bars */
.hbars {
    display: flex;
    flex-direction: column;
    height: 116px;
    margin: 6px 0 3px;
    font-family: Lato, sans-serif;
    font-size: 6px;
    font-weight: 700;
}

.hbar {
    display: flex;
    flex: 1;
    align-items: center;
}

.hbar .name {
    width: 48%;
    padding-right: 6px;
    text-align: right;
    white-space: nowrap;
}

.hbar .plot {
    display: flex;
    flex: 1;
    align-items: center;
    align-self: stretch;
    border-left: 1px solid #fff;
}

.hbar .bar {
    height: 8px;
    line-height: 8px;
    background-color: #fff;
    color: #222;
    font-size: 5px;
    font-weight: 900;
    text-align: center;
}

#topJobs .name { width: 51%; }
#leastJobs .name { width: 55%; }
#decreasing .name { width: 50%; }

/* SVG charts */
.card text {
    fill: #fff;
    font-family: Lato, sans-serif;
    font-weight: bold;
    font-size: 6px;
}

.card text.tiny { font-size: 5px; }
.card text.micro { font-size: 4px; }
.card text.dark { fill: #222; }

/* Scrollbars */
.vscroll {
    display: flex;
    flex-direction: column;
    align-items: center;
    justify-content: space-between;
    width: 16px;
    margin: -5px 0 -3px;
    padding-top: 4px;
    border-left: 1px solid #999;
    background-color: #f3f3f3;
    box-shadow: -12px 5px 0 #fff;
}

.vscroll i {
    width: 6px;
    flex: 1;
    margin: 2px 0 7px;
    border-radius: 3px;
    background-color: #666;
}

/* Sheet tabs */
.sheet-tabs {
    display: flex;
    height: 19px;
    font-size: 9px;
}

.tab-arrows {
    display: flex;
    align-items: center;
    gap: 18px;
    width: 73px;
    padding-left: 20px;
}

.sheet-tabs button {
    width: 48px;
    margin-bottom: 2px;
    border-left: 1px solid #bbb;
}

.sheet-tabs .active {
    background-color: #fff;
    margin-top: -1px;
    border-left: none;
    border-bottom: 2px solid #14592f;
    color: #14592f;
    font-weight: bold;
}

.sheet-tabs .add {
    width: 60px;
    border: none;
}

.hscroll {
    display: flex;
    align-items: center;
    flex: 1;
    gap: 7px;
    max-width: 401px;
    margin-left: auto;
    padding: 0 17px 0 0;
}

.hscroll .grip {
    margin-right: 6px;
}

.hscroll i {
    flex: 1;
    height: 6px;
    border-radius: 3px;
    background-color: #666;
}

/* Status bar */
.status {
    display: flex;
    align-items: center;
    height: 17px;
    padding-left: 8px;
    background-color: #f5f5f5;
}

.ready {
    width: 37px;
}

.access {
    margin: 0 3px 0 13px;
}

.views {
    display: flex;
    align-items: center;
    align-self: stretch;
    margin-left: auto;
    padding-right: 6px;
}

.views button {
    width: 29px;
    height: 100%;
}

.views .on {
    background-color: #dcdcdc;
}

.views .zoom-btn {
    width: 14px;
}

.views span {
    margin-left: 5px;
}

.views input {
    appearance: none;
    width: 73px;
    height: 9px;
    background: linear-gradient(#888, #888) center / 100% 1px no-repeat,
                linear-gradient(#888, #888) center / 1px 5px no-repeat;
}

.views input::-webkit-slider-thumb {
    appearance: none;
    width: 3px;
    height: 8px;
    background-color: #444;
}

/* Task bar */
.taskbar {
    display: flex;
    flex: 1;
    min-height: 28px;
    background: linear-gradient(90deg, #272b34 0%, #272b34 35%, #2b211b 55%, #2a211c 100%);
    color: #fff;
}

.start {
    width: 35px;
}

.task-search {
    display: flex;
    align-items: center;
    gap: 9px;
    width: 211px;
    padding-left: 9px;
    background-color: #f3f3f3;
    color: #222;
    font-size: 10px;
}

.task-search input {
    flex: 1;
    min-width: 0;
}

.apps {
    display: flex;
}

.apps button {
    width: 30px;
    margin: 0 3px;
    border-bottom: 2px solid transparent;
}

.apps .open {
    border-color: #7fb8e0;
}

.apps .focused {
    width: 34px;
    margin: 0 1px;
    background-color: #55504d;
}

.tray {
    display: flex;
    align-items: center;
    gap: 7px;
    margin-left: auto;
}

.tray .news {
    margin-right: 9px;
}

.lang {
    width: 16px;
    font-family: "DejaVu Sans", sans-serif;
    font-size: 9px;
    text-align: center;
}

.clock {
    display: flex;
    flex-direction: column;
    align-items: center;
    width: 48px;
    line-height: 12px;
}

.peek {
    align-self: stretch;
    width: 4px;
    border-left: 1px solid #777;
}

.watermark {
    position: absolute;
    left: 0;
    bottom: 2px;
    pointer-events: none;
}
```

FILE: charts.js
```javascript
const industries = ['Education', 'Entertainment', 'Finance', 'Healthcare', 'IT', 'Manufacturing', 'Retail', 'Transportation'];
const purples = ['#dcb9d3', '#d0a0c6', '#bd7db0', '#a8509a', '#982c88', '#8a2580', '#7a1d72', '#6a1662'];

function el(svg, name, attrs, content) {
    const node = document.createElementNS('http://www.w3.org/2000/svg', name);
    for (const key in attrs) {
        node.setAttribute(key, attrs[key]);
    }
    if (content) node.textContent = content;
    svg.appendChild(node);
}

function label(svg, x, y, content, anchor, cls, angle) {
    const attrs = { x: x, y: y, 'text-anchor': anchor || 'middle', class: cls || '' };
    if (angle) attrs.transform = `rotate(${angle} ${x} ${y})`;
    el(svg, 'text', attrs, content);
}

function columns(id, o) {
    const svg = document.getElementById(id);
    o.heights.forEach((h, i) => {
        const x = o.start + o.step * i;
        el(svg, 'rect', { x: x - o.width / 2, y: o.base - h, width: o.width, height: h, fill: '#fff' });
        if (o.values && o.vertical) label(svg, x + 2, o.base - h / 2, o.values[i] + '%', 'middle', 'tiny dark', -90);
        if (o.values && !o.vertical) label(svg, x, o.base - h - 1, o.values[i] + '%', 'middle', 'tiny');
        if (o.flat) label(svg, x, o.base + 9, o.names[i], 'middle', 'tiny');
        else label(svg, x + 1, o.base + 8, o.names[i], 'end', o.nameClass, -46);
    });
    el(svg, 'path', { d: `M${o.axis[0]} ${o.base}H${o.axis[1]}`, stroke: '#fff' });
}

function pie(id, cx, cy, r, colors, labels, legend) {
    const svg = document.getElementById(id);
    const n = colors.length;
    const point = i => {
        const a = i / n * Math.PI * 2;
        return `${cx + r * Math.sin(a)} ${cy - r * Math.cos(a)}`;
    };
    colors.forEach((color, i) => {
        el(svg, 'path', { d: `M${cx} ${cy}L${point(i)}A${r} ${r} 0 0 1 ${point(i + 1)}Z`, fill: color, stroke: '#fff' });
    });
    labels.forEach(l => label(svg, l[1], l[2], l[0] + '%'));
    legend.names.forEach((name, i) => {
        const y = legend.y + legend.step * i;
        el(svg, 'rect', { x: legend.x, y: y - 2, width: 4, height: 4, fill: colors[i], stroke: '#fff', 'stroke-width': 0.8 });
        label(svg, legend.x + 5, y + 2, name, 'start', legend.cls);
    });
}

function hbars(id, rows, outside) {
    document.getElementById(id).innerHTML = rows.map(r => `
        <div class="hbar">
            <span class="name">${r[0]}</span>
            <span class="plot"><span class="bar" style="width: ${r[2]}%">${outside ? '' : r[1] + '%'}</span>${outside ? `<span class="value">${r[1]}</span>` : ''}</span>
        </div>`).join('');
}

columns('riskIndustry', {
    start: 20, step: 14, width: 8, base: 92, axis: [12, 126], vertical: true, names: industries,
    heights: [54, 80, 76, 65, 48, 35, 36, 89],
    values: ['50.01', '50.59', '50.51', '50.27', '49.88', '49.59', '49.61', '50.79']
});

columns('forecast', {
    start: 31, step: 10.4, width: 6, base: 80, axis: [26, 110], names: industries,
    heights: [39, 69, 39, 48, 26, 67, 26, 41]
});

const forecast = document.getElementById('forecast');
el(forecast, 'polyline', { points: '31,44 41.4,12 51.8,41 62.2,26 72.6,39 83,22 93.4,45 103.8,50', fill: 'none', stroke: '#e030d0' });
['20', '19.5', '19', '18.5', '18', '17.5'].forEach((t, i) => label(forecast, 20, 4 + i * 15.7, t, 'end'));
['20.5', '20', '19.5', '19', '18.5', '18', '17.5', '17'].forEach((t, i) => label(forecast, 115, 4 + i * 11.2, t, 'start'));
label(forecast, 5, 10, 'Millions', 'middle', 'micro', -90);
label(forecast, 132, 10, 'Millions', 'middle', 'micro', -90);
label(forecast, 67, 121, '■Sum of Job Openings (2024) —Sum of Projected Openings (2030)', 'middle', 'micro');

columns('remoteIndustry', {
    start: 20, step: 21.5, width: 7, base: 21, axis: [9, 181], nameClass: 'tiny',
    names: industries.slice(0, 7).concat('Transportat...'),
    heights: [15, 14, 7, 17, 12, 17, 16, 15],
    values: ['49.87', '49.81', '48.61', '50.36', '49.34', '50.48', '50.18', '50.01']
});

columns('remoteLocation', {
    start: 15, step: 21.8, width: 7, base: 42, axis: [5, 179], flat: true,
    names: ['Australia', 'Brazil', 'Canada', 'China', 'Germany', 'India', 'UK', 'USA'],
    heights: [20, 33, 16, 22, 26, 30, 14, 11],
    values: ['49.73', '50.55', '49.51', '49.90', '50.09', '50.33', '49.39', '49.31']
});

pie('pieLocation', 47, 27, 25, purples, [
    ['54.30', 68, 5], ['47.49', 82, 18], ['50.49', 81, 41], ['48.70', 67, 55],
    ['50.54', 26, 55], ['50.47', 11, 40], ['48.65', 13, 15], ['49.72', 26, 5]
], { x: 106, y: 4, step: 7.6, names: ['Australia', 'Brazil', 'Canada', 'China', 'Germany', 'India', 'UK'], cls: 'tiny' });

pie('pieExperience', 51, 28, 24, ['#6e1a68', '#84217b', '#9a2a8e', '#bd7db0', '#d5aecd'], [
    ['49.29', 76, 7], ['50.44', 85, 40], ['50.17', 51, 55], ['50.04', 17, 40], ['50.02', 26, 7]
], { x: 98, y: 12, step: 8.2, names: ['entry-level', 'expert', 'jouner', 'senoir', 'superviser'] });

pie('pieEducation', 66, 27, 21, ['#6e1a68', '#84217b', '#9a2a8e', '#bd7db0', '#d5aecd'], [
    ['49.96', 89, 9], ['49.73', 97, 37], ['50.31', 66, 51], ['50.10', 35, 38], ['50.69', 42, 9]
], { x: 115, y: 14, step: 6.9, names: ['AssociateDegree', 'DegreeBachelor', 'DegreeMaster', 'HighSchool', 'PHD'], cls: 'tiny' });

hbars('topJobs', [
    ['Proofreader', '64.20', 85], ['Pension Scheme Manager', '63.51', 75], ['Wellsite Geologist', '62.73', 69],
    ['Dancer', '62.58', 66], ['Legal Executive', '62.39', 64], ['Recruitment Consultant', '60.65', 47],
    ['Audiological Scientist', '60.24', 43], ['Osteopath', '60.07', 41], ['Consulting Civil Engineer', '59.94', 40],
    ['Conservator Museum Gallery', '59.94', 40]
]);

hbars('leastJobs', [
    ['Building Surveyor', '37.85', 28], ['Careers Adviser', '38.89', 47], ['Art Therapist', '39.79', 59],
    ['Computer Games Developer', '39.83', 61], ['Careers Information Officer', '40.60', 71], ['Heritage Manager', '40.85', 72],
    ['Oceanographer', '40.92', 76], ['Probation Officer', '40.92', 76], ['Information Systems Manager', '41.35', 81],
    ['Estate Manager Land Agent', '41.20', 81]
]);

hbars('decreasing', [
    ['Dietitian', '4183', 82], ['Contracting Civil Engineer', '3619', 81], ['Product Process...', '-75178', 73],
    ['Teacher Special...', '-69014', 67], ['Learning Mentor', '-64745', 63], ['Geochemist', '-62938', 61],
    ['Multimedia Specialist', '-62659', 61], ['Planning And...', '-61969', 60], ['Conference Centre Manager', '-58429', 57],
    ['Further Education Lecturer', '-58081', 57]
], true);
```
